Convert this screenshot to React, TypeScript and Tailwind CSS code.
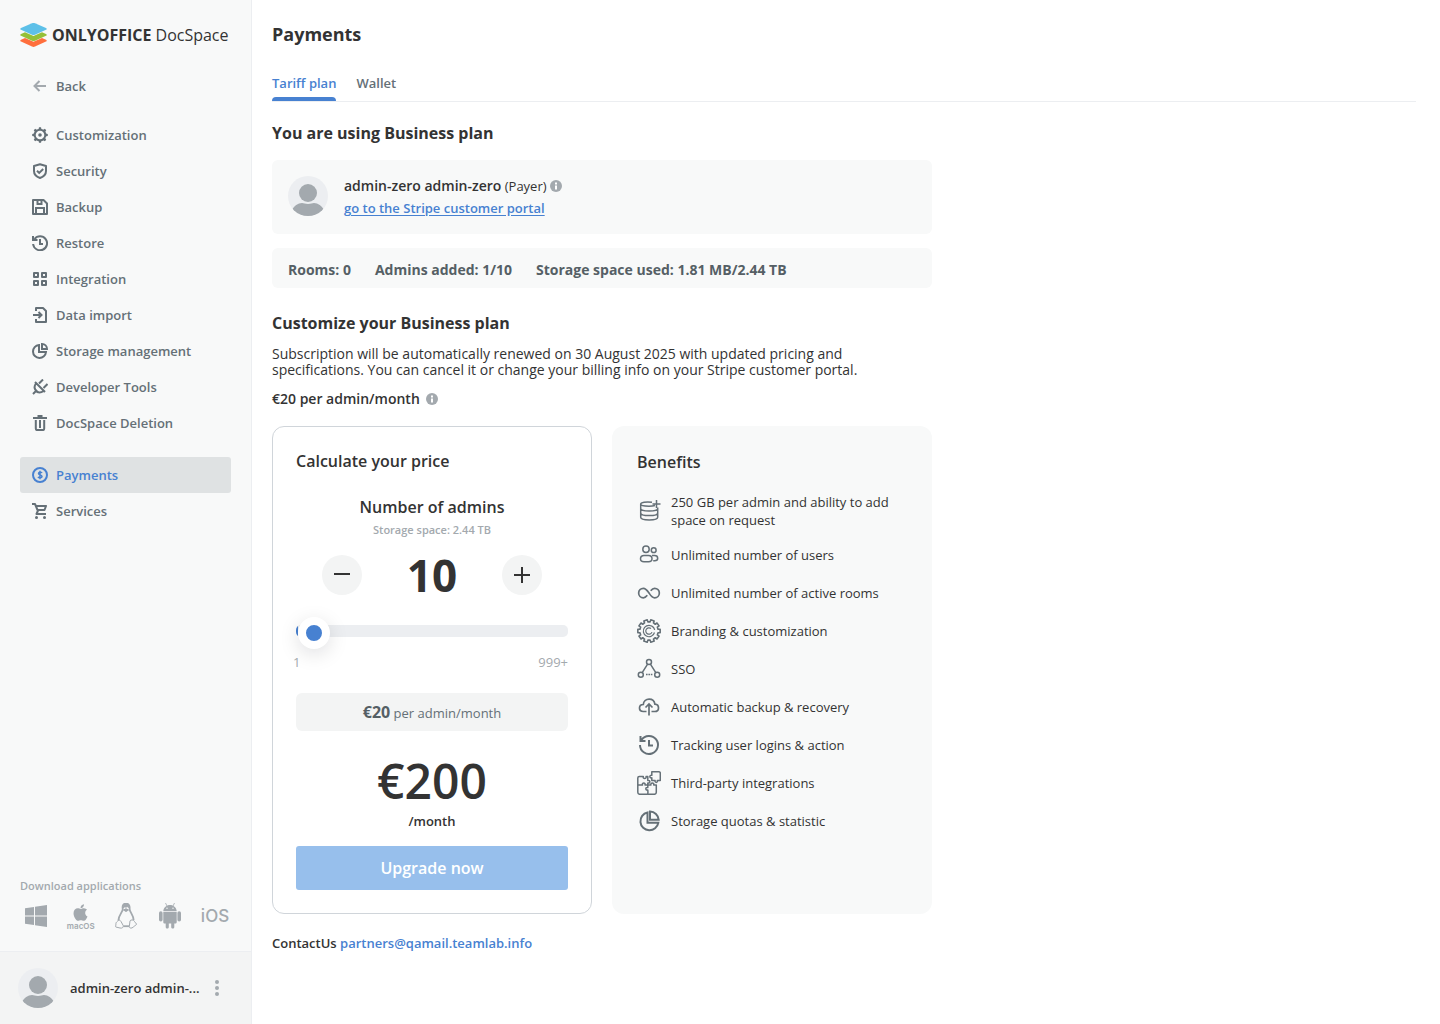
import { useId, useState } from "react";
import type { ReactNode } from "react";
import { FaApple } from "react-icons/fa";

type IconProps = { children: ReactNode; size?: "small" | "large" };

function Icon({ children, size = "small" }: IconProps) {
  const large = size === "large";
  return (
    <svg
      className={large ? "size-6 shrink-0" : "size-4 shrink-0"}
      viewBox={large ? "0 0 24 24" : "0 0 16 16"}
      fill="none"
      stroke="currentColor"
      strokeWidth={large ? 1.5 : 2}
      aria-hidden="true"
    >
      {children}
    </svg>
  );
}

const eightAngles = [0, 45, 90, 135, 180, 225, 270, 315];

const icons = {
  back: (
    <Icon>
      <path d="M14 8H2.5M7.5 3 2.5 8l5 5" />
    </Icon>
  ),
  gear: (
    <Icon>
      <circle cx="8" cy="8" r="5.300" />
      <circle cx="8" cy="8" r="1.800" fill="currentColor" stroke="none" />
      {eightAngles.map((a) => (
        <path key={a} d="M6.500 2.500 7 .2h2l.5 2.300z" fill="currentColor" stroke="none" transform={`rotate(${a} 8 8)`} />
      ))}
    </Icon>
  ),
  shield: (
    <Icon>
      <path d="M8 1.300 14 3v5c0 3.400-2.600 5.800-6 7-3.400-1.200-6-3.600-6-7V3z" strokeLinejoin="round" />
      <path d="m5 7.700 2.200 2.200L11.200 6" />
    </Icon>
  ),
  save: (
    <Icon>
      <path d="M1 1h10.500L15 4.500V15H1z" strokeLinejoin="round" />
      <path d="M5.500 1v4h4V1M4 15V9h8v6" />
    </Icon>
  ),
  restore: (
    <Icon>
      <path d="M2.500 4A7 7 0 1 1 1.100 9" />
      <path d="M1 1v4h4.500" />
      <path d="M8 4v5h3" />
    </Icon>
  ),
  grid: (
    <Icon>
      <path d="M2 2h4v4H2zM10 2h4v4h-4zM2 10h4v4H2zM10 10h4v4h-4z" strokeLinejoin="round" />
    </Icon>
  ),
  dataImport: (
    <Icon>
      <path d="M4 4V1h7l3 3v11H4v-3" strokeLinejoin="round" />
      <path d="M1 8h8M6.500 5l3 3-3 3" />
    </Icon>
  ),
  pie: (
    <Icon>
      <path d="M7 2a6.500 6.500 0 1 0 7 7H7z" />
      <path d="M10 1v5h5a5 5 0 0 0-5-5z" />
    </Icon>
  ),
  plug: (
    <Icon>
      <path d="m3 3 10 10M4 4.500C2 7 2.500 10 4 12s5 2 7.500 0M3.500 12.500 1 15M7 4.500l4-4M11.500 9l4-4" />
      <path d="M3 9v4h4z" fill="currentColor" stroke="none" />
    </Icon>
  ),
  trash: (
    <Icon>
      <path d="M1 3h14M5.500 1h5" />
      <path d="M3.800 5v8.500c0 1 .7 1.600 1.600 1.600h5.200c.9 0 1.600-.6 1.600-1.600V5" />
      <path d="M8 5v8" />
    </Icon>
  ),
  dollar: (
    <Icon>
      <circle cx="8" cy="8" r="7" />
      <path d="M10 6C9.500 5 6.500 4.700 6.500 6.400S10 7.700 10 9.500 6.500 11 6 9.900M8 3.700v8.600" strokeWidth="1.500" />
    </Icon>
  ),
  cart: (
    <Icon>
      <path d="M0 1h3l2.500 6h7L14 3H4M6 7.500 4.500 11H14" strokeLinejoin="round" />
      <circle cx="4.500" cy="14.500" r="1.500" fill="currentColor" stroke="none" />
      <circle cx="12.500" cy="14.500" r="1.500" fill="currentColor" stroke="none" />
    </Icon>
  ),
};

const gearOutline = Array.from({ length: 10 }, (_, i) => {
  const point = (radius: number, degrees: number) => {
    const angle = (degrees * Math.PI) / 180;
    return `${(12 + radius * Math.sin(angle)).toFixed(2)} ${(12 - radius * Math.cos(angle)).toFixed(2)}`;
  };
  const center = i * 36 + 18;
  return `${i ? "L" : "M"}${point(9.2, center - 11)}L${point(11.3, center - 9)}L${point(11.3, center + 9)}L${point(9.2, center + 11)}`;
}).join("") + "Z";

const benefits: { text: string; icon: ReactNode }[] = [
  {
    text: "250 GB per admin and ability to add space on request",
    icon: (
      <Icon size="large">
        <path d="M15 3.200C9 2.500 3.700 3.300 3.700 5c0 1.500 4 2.200 8.300 2.200 2.500 0 4.700-.3 6-.7M3.700 5v13.300c0 1.700 3.500 2.700 8.500 2.700s8.500-1 8.500-2.700V8.500M3.700 9.400c0 1.600 3.500 2.500 8.500 2.500s8.500-.9 8.500-2.500M3.700 13.900c0 1.600 3.500 2.600 8.500 2.600s8.500-1 8.500-2.600M19.500 1v8M15.500 5h8" />
      </Icon>
    ),
  },
  {
    text: "Unlimited number of users",
    icon: (
      <Icon size="large">
        <circle cx="9" cy="6.200" r="3.200" />
        <circle cx="16.700" cy="7.200" r="2.400" />
        <path d="M7 12.500h4.500c2 0 3.500 1.400 3.500 3.300 0 2-1.500 3-3.500 3H7c-2 0-3.500-1-3.500-3s1.500-3.300 3.500-3.300zM15 12.500h2.500c2 0 3.200 1.200 3.200 2.700 0 1.600-1.200 2.500-3 2.500h-1.500" />
      </Icon>
    ),
  },
  {
    text: "Unlimited number of active rooms",
    icon: (
      <Icon size="large">
        <path d="M10.300 14.300c-1.200 1.600-2.300 2.500-3.900 2.500a4.700 4.700 0 0 1 0-9.500c2.600 0 3.900 2.200 5.600 4.700s3 4.800 5.600 4.800a4.700 4.700 0 0 0 0-9.500c-1.600 0-2.700.9-3.900 2.400" strokeWidth="1.700" />
      </Icon>
    ),
  },
  {
    text: "Branding & customization",
    icon: (
      <Icon size="large">
        <path d={gearOutline} strokeLinejoin="round" strokeWidth="1.600" />
        <path d="M16.500 8.500A5.700 5.700 0 1 0 17.500 13.500M14.500 6.900a5.700 5.700 0 0 1 3.200 4" strokeWidth="1.200" />
        <path d="M14 9.500a3.200 3.200 0 1 0 1 3.600" strokeWidth="1.200" />
      </Icon>
    ),
  },
  {
    text: "SSO",
    icon: (
      <Icon size="large">
        <circle cx="12" cy="5" r="2.500" />
        <circle cx="3.800" cy="17.800" r="2.500" />
        <circle cx="20.200" cy="17.800" r="2.500" />
        <path d="M10.600 7.200 5.200 15.700M13.400 7.200l5.400 8.500" />
        <path d="M9 17.500h6.500" strokeDasharray="1.600 .8" strokeWidth="1.600" />
      </Icon>
    ),
  },
  {
    text: "Automatic backup & recovery",
    icon: (
      <Icon size="large">
        <path d="M9.500 16.500H6.300C4 16.500 2.500 15 2.500 13c0-2.200 1.800-3.500 3.800-3.500.2-3 2.700-5.300 5.800-5.300s5.400 2.100 5.800 5c2 .2 3.600 1.600 3.600 3.700s-1.500 3.600-3.800 3.600h-3.200M12 20.500V9M8.500 12.500 12 9l3.500 3.500" strokeWidth="1.700" />
      </Icon>
    ),
  },
  {
    text: "Tracking user logins & action",
    icon: (
      <Icon size="large">
        <path d="M4.500 7a9 9 0 1 1-1.500 5M3.500 3v5h5M12 7v5.500h4" strokeWidth="2" />
      </Icon>
    ),
  },
  {
    text: "Third-party integrations",
    icon: (
      <Icon size="large">
        <path d="M2.300 5.500h4c-.8 2.700 3.500 2.700 2.800 0h1.700v4c2.700-.8 2.700 3.300 0 2.500v2H8c.8-2.700-3.300-2.700-2.500 0H.8V7c0-1 .5-1.500 1.500-1.500zM.8 14v7.300c0 1.400.6 2 2 2h7.500c1 0 .5-3.500.5-4.300-2.600.8-2.600-3.300 0-2.500V14" strokeLinejoin="round" />
        <path d="M10.800 23.300h6.500c1.300 0 2-.7 2-2V14h-2.600c.8-2.700-3.500-2.700-2.800 0h-3.100" strokeLinejoin="round" />
        <path d="M14.800.8H22c.9 0 1.300.5 1.300 1.400v7.300h-3c.8 2.500-2.800 2.500-2.200 0h-3.300V6.800c-2.600.7-2.600-3.200 0-2.500z" strokeLinejoin="round" />
      </Icon>
    ),
  },
  {
    text: "Storage quotas & statistic",
    icon: (
      <Icon size="large">
        <path d="M10.500 3.500a9 9 0 1 0 10.800 10.300H10.500z" strokeWidth="2" />
        <path d="M13 2.500v8.300h8.700A9 9 0 0 0 13 2.500z" strokeWidth="2" />
      </Icon>
    ),
  },
];

const settingsLinks = [
  { label: "Customization", icon: icons.gear },
  { label: "Security", icon: icons.shield },
  { label: "Backup", icon: icons.save },
  { label: "Restore", icon: icons.restore },
  { label: "Integration", icon: icons.grid },
  { label: "Data import", icon: icons.dataImport },
  { label: "Storage management", icon: icons.pie },
  { label: "Developer Tools", icon: icons.plug },
  { label: "DocSpace Deletion", icon: icons.trash },
];

const billingLinks = [
  { label: "Payments", icon: icons.dollar, active: true },
  { label: "Services", icon: icons.cart },
];

function NavLink({ label, icon, active }: { label: string; icon: ReactNode; active?: boolean }) {
  return (
    <a
      href="#"
      aria-current={active ? "page" : undefined}
      className={
        active
          ? "flex h-9 items-center gap-2 rounded-[3px] bg-[#dfe2e3] px-3 text-[#4781d1]"
          : "flex h-9 items-center gap-2 rounded-[3px] px-3 text-[#657077]"
      }
    >
      {icon}
      {label}
    </a>
  );
}

function Avatar() {
  const clip = useId();
  return (
    <svg className="size-10 shrink-0" viewBox="0 0 40 40" aria-hidden="true">
      <clipPath id={clip}>
        <circle cx="20" cy="20" r="20" />
      </clipPath>
      <g clipPath={`url(#${clip})`}>
        <path d="M0 0h40v40H0z" fill="#eceef1" />
        <circle cx="20" cy="17" r="9" fill="#a3a9ae" />
        <path d="M4 34c2-4 6-7 10-7 2 0 3 1 6 1s4-1 6-1c4 0 8 3 10 7v7H4z" fill="#a3a9ae" />
      </g>
    </svg>
  );
}

function InfoButton({ label }: { label: string }) {
  return (
    <button type="button" aria-label={label} className="shrink-0">
      <svg className="size-3" viewBox="0 0 12 12" aria-hidden="true">
        <circle cx="6" cy="6" r="6" fill="#a3a9ae" />
        <path d="M5 2.500h2v2H5zM5 5.500h2v4H5z" fill="#fff" />
      </svg>
    </button>
  );
}

function Logo() {
  return (
    <a href="#" className="flex h-6 items-center gap-[5px] whitespace-nowrap text-[#333]">
      <svg className="h-6 w-[27px] shrink-0" viewBox="0 0 27 24" aria-hidden="true">
        <path d="M1 16.700 5 15l8.500 3.800L22 15l4 1.700c1 .5 1 1.300 0 1.800l-11 5c-1 .5-2 .5-3 0l-11-5c-1-.5-1-1.300 0-1.800z" fill="#ff6f3d" />
        <path d="m1 11 4-1.700 8.500 3.700L22 9.300l4 1.700c1 .5 1 1.300 0 1.800l-11 4.900c-1 .4-2 .4-3 0L1 12.800c-1-.5-1-1.300 0-1.800z" fill="#95c038" />
        <path d="M1 5 12 .3c1-.4 2-.4 3 0L26 5c1 .5 1 1.300 0 1.800l-11 5c-1 .4-2 .4-3 0l-11-5C0 6.300 0 5.500 1 5z" fill="#5dc0e8" />
      </svg>
      <span className="flex items-baseline gap-1">
        <span className="text-base/6 font-bold">ONLYOFFICE</span>
        <span className="text-base/6 font-normal">DocSpace</span>
      </span>
    </a>
  );
}

function DownloadLinks() {
  return (
    <div className="flex items-center justify-between text-[#a3a9ae]">
      <a href="#" aria-label="Windows" className="flex size-8 items-center justify-center">
        <svg className="h-[22px] w-[22px]" viewBox="0 0 22 22" fill="currentColor" aria-hidden="true">
          <path d="M0 3.200 9 2v8.500H0zM10 1.800 22 0v10.500H10zM0 11.500h9V20l-9-1.300zM10 11.500h12V22l-12-1.800z" />
        </svg>
      </a>
      <a href="#" aria-label="macOS" className="flex size-8 flex-col items-center justify-center">
        <FaApple className="h-[19px] w-[19px] shrink-0" />
        <span className="font-['Inter',sans-serif] text-[8px]/2 font-semibold">macOS</span>
      </a>
      <a href="#" aria-label="Linux" className="flex size-8 items-center justify-center">
        <svg className="h-[26px] w-[22px]" viewBox="0 0 22 26" fill="none" stroke="currentColor" aria-hidden="true">
          <path d="M7.800 6C7 2.500 8.500.6 11 .6S15 2.500 14.600 6c0 3 4 6 4 11M7.800 6c0 3-4.800 7-4.300 11.500" strokeWidth="1.800" />
          <path d="M8 5c0-3 1-4 3-4s3.200 1.300 3.200 4l-1-1.500-2 .6L9.500 4z" fill="currentColor" />
          <path d="m8.500 7 2.500-1.300L13.500 7 11 8.500z" fill="currentColor" />
          <path d="M3 17.500c1-1 2-.5 3 1l2.200 4c.5 2-1.200 3-3.200 2.500L.8 24c-.6-.5.300-1.500.1-3.300C.8 19 2.500 19 3 17.500zM15 18c.2-1.500 4-1.500 4.500.5.3 1.200 1.800 1.500 2 2.500s-2 1.800-3.200 3c-1.500 1.700-4 1.500-4-.5z" />
          <path d="M8.400 23.200h5.700" strokeWidth="1.800" />
        </svg>
      </a>
      <a href="#" aria-label="Android" className="flex size-8 items-center justify-center">
        <svg className="h-[26px] w-[22px]" viewBox="0 0 22 26" fill="currentColor" aria-hidden="true">
          <path d="m6.500 0 1.500 3M15.500 0 14 3" stroke="currentColor" strokeWidth=".8" />
          <path d="M4.300 8c.4-3.600 3.200-6 6.700-6s6.300 2.400 6.700 6zM4.300 8.700h13.400V19c0 1-.6 1.500-1.500 1.500h-.9V24c0 2-3.100 2-3.100 0v-3.500H9.800V24c0 2-3.100 2-3.100 0v-3.500h-.9c-.9 0-1.500-.5-1.500-1.500z" />
          <rect x="0" y="8.300" width="3.600" height="10.200" rx="1.800" />
          <rect x="18.400" y="8.300" width="3.600" height="10.200" rx="1.800" />
          <circle cx="8" cy="5.300" r=".7" fill="#f8f9f9" />
          <circle cx="14" cy="5.300" r=".7" fill="#f8f9f9" />
        </svg>
      </a>
      <a href="#" className="flex size-8 items-center justify-center font-['Inter',sans-serif] text-[17px] font-medium">
        iOS
      </a>
    </div>
  );
}

function Sidebar() {
  return (
    <aside className="flex w-[252px] shrink-0 flex-col border-r border-[#eceef1] bg-[#f8f9f9] text-[13px]/5 font-semibold">
      <div className="flex grow flex-col px-5 pt-[23px]">
        <Logo />
        <nav className="flex flex-col pt-[21px]">
          <a href="#" className="flex h-9 items-center gap-2 px-3 text-[#657077]">
            <span className="text-[#a3a9ae]">{icons.back}</span>
            Back
          </a>
          <div className="mt-[13px] flex flex-col">
            {settingsLinks.map((link) => (
              <NavLink key={link.label} {...link} />
            ))}
          </div>
          <div className="mt-4 flex flex-col">
            {billingLinks.map((link) => (
              <NavLink key={link.label} {...link} />
            ))}
          </div>
        </nav>
        <div className="mt-auto pb-[19px]">
          <p className="mb-[6px] text-[11px]/4 text-[#a3a9ae]">Download applications</p>
          <DownloadLinks />
        </div>
      </div>
      <div className="flex h-[73px] items-center border-t border-[#eceef1] bg-[#f3f4f4] pr-[26px] pl-[18px] text-[#333]">
        <Avatar />
        <span className="ml-3 grow whitespace-nowrap">admin-zero admin-...</span>
        <button type="button" aria-label="Account menu" className="ml-2 flex size-4 shrink-0 items-center justify-center text-[#a3a9ae]">
          <svg className="h-4 w-1" viewBox="0 0 4 16" fill="currentColor" aria-hidden="true">
            <circle cx="2" cy="2" r="2" />
            <circle cx="2" cy="8" r="2" />
            <circle cx="2" cy="14" r="2" />
          </svg>
        </button>
      </div>
    </aside>
  );
}

function Calculator() {
  const [admins, setAdmins] = useState(10);
  const update = (value: number) => setAdmins(Math.min(999, Math.max(1, value)));
  return (
    <section className="flex flex-col rounded-xl border border-[#d0d5da] px-[23px] pt-[22px] pb-[23px]">
      <h3 className="text-base/6 font-semibold">Calculate your price</h3>
      <label htmlFor="admins" className="mt-[22px] text-center text-base/6 font-semibold">
        Number of admins
      </label>
      <p className="mt-[3px] text-center text-[11px]/4 font-semibold text-[#a3a9ae]">Storage space: 2.44 TB</p>
      <div className="mt-4 flex h-[42px] items-center justify-between px-[26px]">
        <button type="button" aria-label="Remove admin" onClick={() => update(admins - 1)} className="flex size-10 items-center justify-center rounded-full bg-[#f3f4f4]">
          <svg className="size-4" viewBox="0 0 16 16" stroke="#333" strokeWidth="2" overflow="visible" aria-hidden="true">
            <path d="M0 7h16" />
          </svg>
        </button>
        <output htmlFor="admins" className="text-[44px]/[60px] font-bold">{admins}</output>
        <button type="button" aria-label="Add admin" onClick={() => update(admins + 1)} className="flex size-10 items-center justify-center rounded-full bg-[#f3f4f4]">
          <svg className="size-4" viewBox="0 0 16 16" stroke="#333" strokeWidth="2" overflow="visible" aria-hidden="true">
            <path d="M0 8h16M8 0v16" />
          </svg>
        </button>
      </div>
      <input
        id="admins"
        type="range"
        min={1}
        max={999}
        value={admins}
        onChange={(event) => update(Number(event.target.value))}
        style={{ backgroundSize: `${((admins - 1) / 998) * 100}% 100%` }}
        className="mt-[29px] h-3 w-full cursor-pointer appearance-none rounded-[5px] bg-[#eceef1] bg-[linear-gradient(#4781d1,#4781d1)] bg-no-repeat [&::-webkit-slider-thumb]:mt-1 [&::-webkit-slider-thumb]:size-8 [&::-webkit-slider-thumb]:appearance-none [&::-webkit-slider-thumb]:rounded-full [&::-webkit-slider-thumb]:border-8 [&::-webkit-slider-thumb]:border-white [&::-webkit-slider-thumb]:bg-[#4781d1] [&::-webkit-slider-thumb]:shadow-[0_5px_20px_rgba(4,15,27,0.13)]"
      />
      <div className="mt-4 -ml-[3px] flex justify-between text-[13px]/[18px] text-[#a3a9ae]">
        <span>1</span>
        <span>999+</span>
      </div>
      <p className="mt-[22px] h-[38px] rounded-md bg-[#f3f4f4] text-center text-[13px]/[38px] text-[#657077]">
        <strong className="text-base/[38px] font-bold text-[#555f65]">€20</strong> per admin/month
      </p>
      <p className="mt-[18px] text-center text-5xl/[64px] font-semibold">€{admins * 20}</p>
      <p className="text-center text-[13px]/4 font-semibold">/month</p>
      <button type="button" disabled className="mt-[17px] h-11 rounded-[3px] bg-[#97bfec] text-base font-semibold text-white">
        Upgrade now
      </button>
    </section>
  );
}

export default function App() {
  return (
    <div className="flex min-h-screen bg-white font-['Open_Sans',sans-serif] text-[#333]">
      <Sidebar />
      <main className="min-w-0 grow pr-6 pl-5">
        <h1 className="pt-[22px] text-lg/6 font-bold">Payments</h1>
        <div role="tablist" className="mt-[28px] flex h-7 gap-5 border-b border-[#eceef1] text-[13px]/[18px] font-semibold">
          <button role="tab" aria-selected="true" type="button" className="flex flex-col text-[#4781d1]">
            Tariff plan
            <span className="mt-[5px] h-1 w-full rounded-t bg-[#4781d1]" />
          </button>
          <button role="tab" aria-selected="false" type="button" className="flex flex-col text-[#657077]">
            Wallet
          </button>
        </div>
        <div className="max-w-[660px]">
          <h2 className="mt-5 text-base/[22px] font-bold">You are using Business plan</h2>
          <section className="mt-4 flex h-[74px] gap-4 rounded-md bg-[#f8f9f9] p-4">
            <Avatar />
            <div>
              <p className="flex h-5 items-center gap-[3px] text-[13px]">
                <span>
                  <span className="text-sm/5 font-semibold">admin-zero admin-zero</span> (Payer)
                </span>
                <InfoButton label="About the payer" />
              </p>
              <a href="#" className="mt-[3px] block text-[13px]/[18px] font-semibold text-[#4781d1] underline underline-offset-2">
                go to the Stripe customer portal
              </a>
            </div>
          </section>
          <section className="mt-[14px] flex h-10 items-center gap-6 rounded-md bg-[#f8f9f9] px-4 pt-1 text-sm font-bold text-[#555f65]">
            <p>Rooms: 0</p>
            <p>Admins added: 1/10</p>
            <p>Storage space used: 1.81 MB/2.44 TB</p>
          </section>
          <h2 className="mt-6 text-base/[22px] font-bold">Customize your Business plan</h2>
          <p className="mt-3 text-sm/4">
            Subscription will be automatically renewed on 30 August 2025 with updated pricing and specifications. You
            can cancel it or change your billing info on your Stripe customer portal.
          </p>
          <p className="mt-[11px] flex items-center gap-[6px] text-sm/5 font-semibold">
            €20 per admin/month
            <InfoButton label="About the price" />
          </p>
          <div className="mt-[17px] grid grid-cols-2 gap-5">
            <Calculator />
            <section className="rounded-xl bg-[#f8f9f9] px-[25px] py-6">
              <h3 className="text-base/6 font-semibold">Benefits</h3>
              <ul className="mt-[19px] flex flex-col gap-[14px] text-[13px]/[18px]">
                {benefits.map((benefit) => (
                  <li key={benefit.text} className="flex items-center gap-[10px]">
                    <span className="text-[#657077]">{benefit.icon}</span>
                    <span>{benefit.text}</span>
                  </li>
                ))}
              </ul>
            </section>
          </div>
          <p className="mt-5 text-[13px]/[18px] font-semibold">
            ContactUs{" "}
            <a href="mailto:partners@qamail.teamlab.info" className="text-[#4781d1]">
              partners@qamail.teamlab.info
            </a>
          </p>
        </div>
      </main>
    </div>
  );
}
